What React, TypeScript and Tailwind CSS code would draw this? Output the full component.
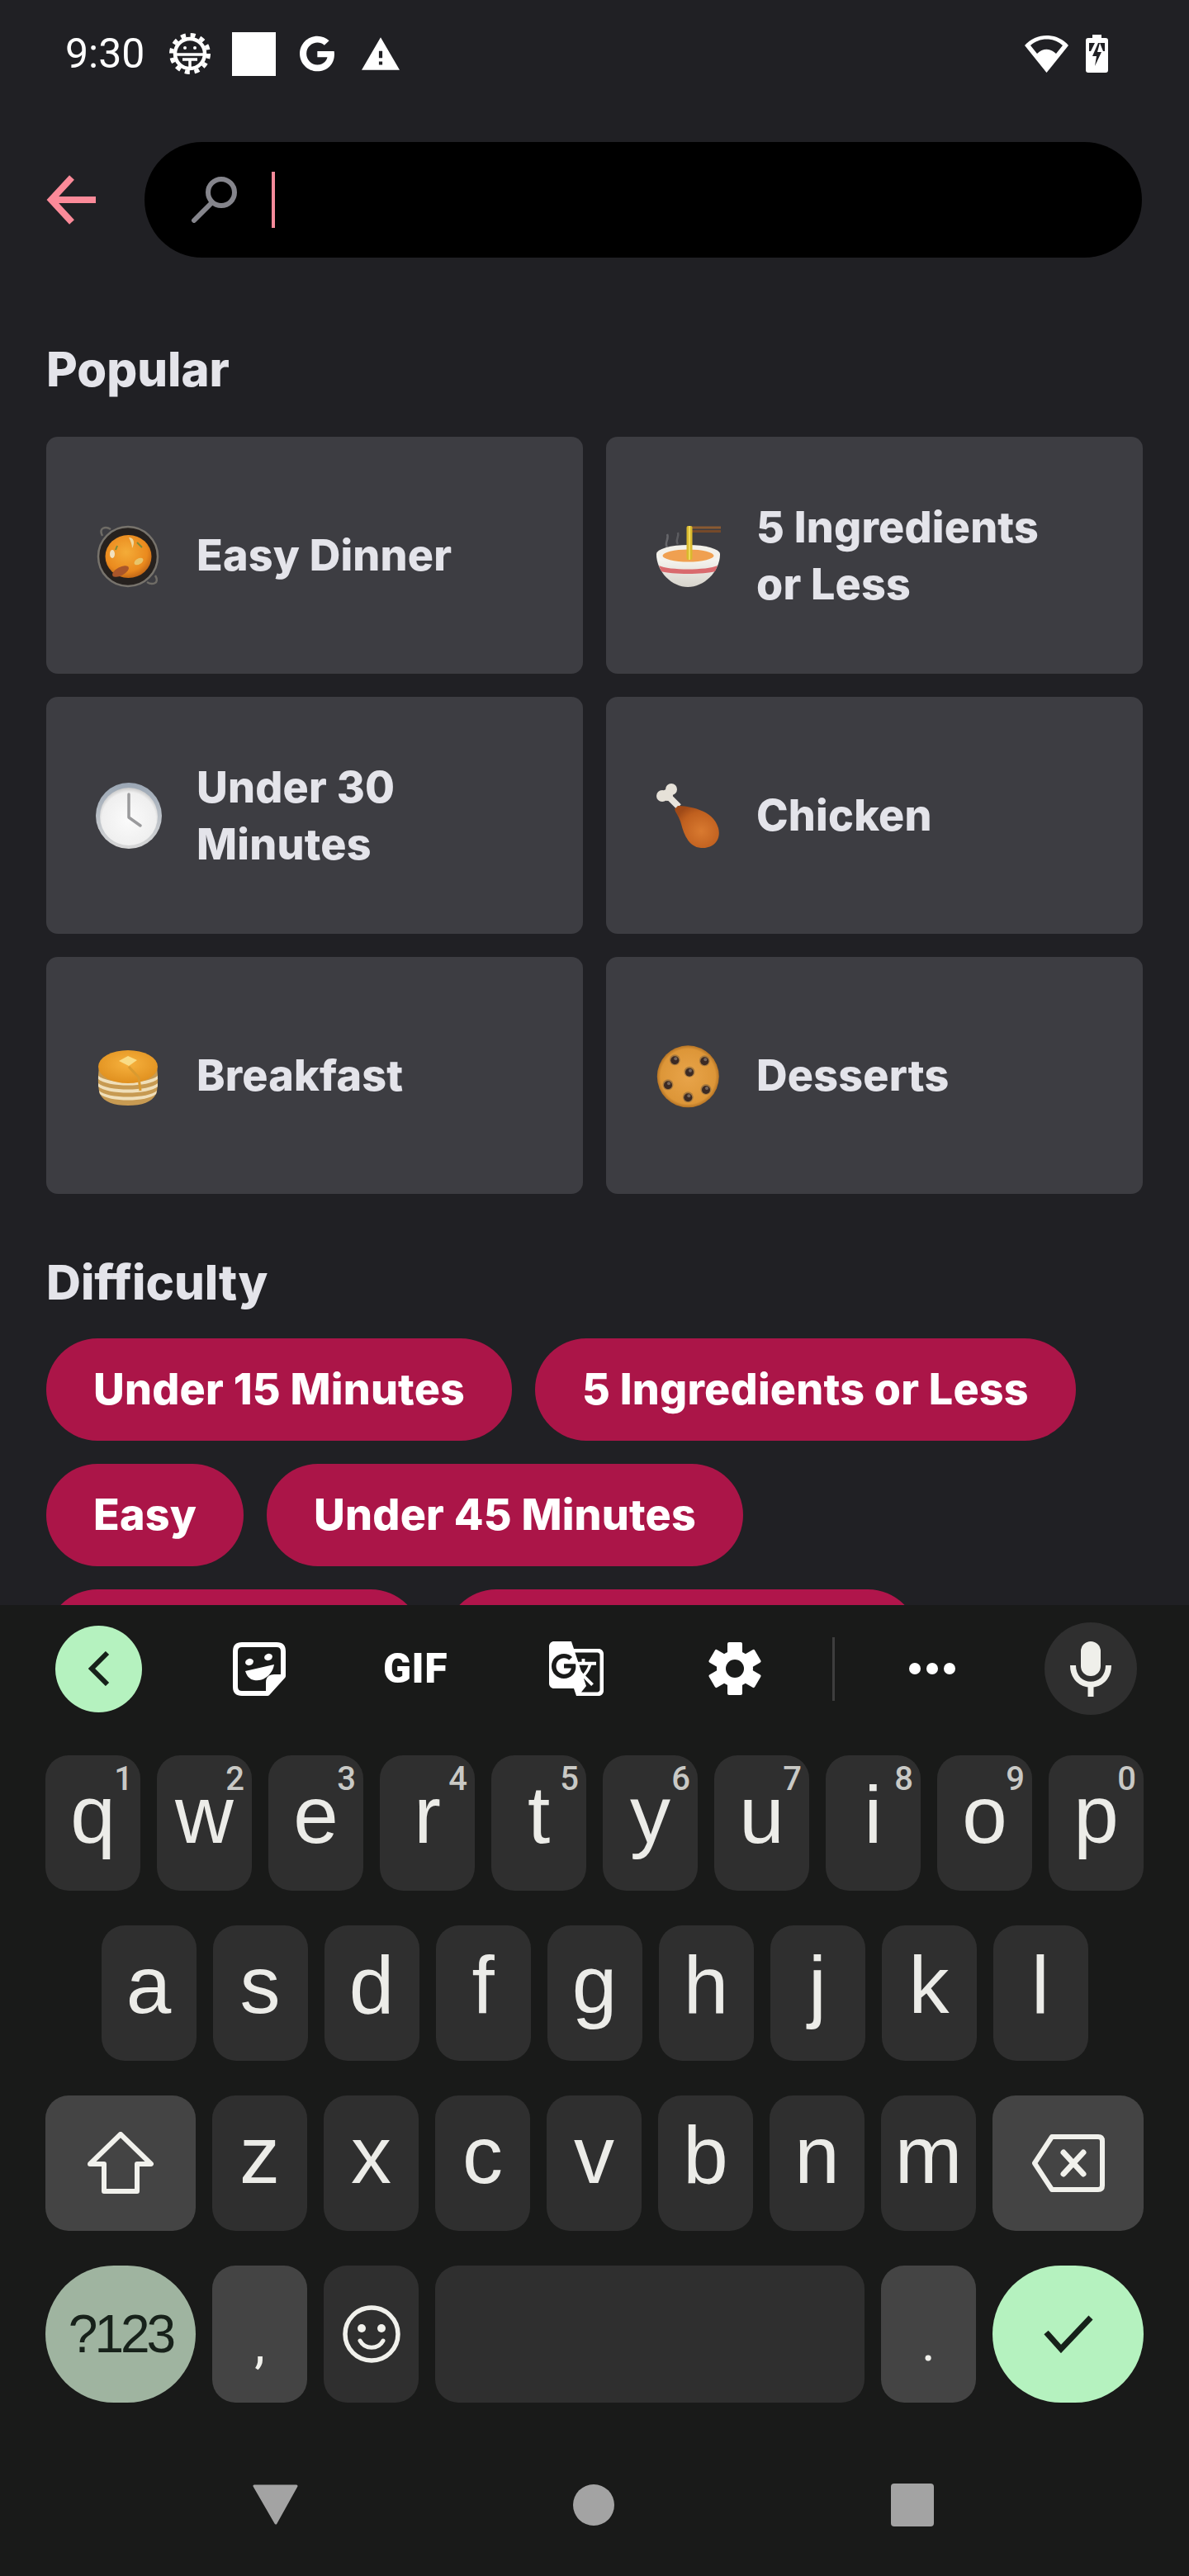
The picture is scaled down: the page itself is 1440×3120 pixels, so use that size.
import React from "react";
import { FaGoogle } from "react-icons/fa";
import { MdGTranslate } from "react-icons/md";

const Paella = () => (
  <svg width="80" height="80" viewBox="0 0 80 80">
    <defs>
      <radialGradient id="rice" cx="45%" cy="40%" r="65%">
        <stop offset="0" stopColor="#f4ac38" />
        <stop offset="0.7" stopColor="#ea8a1e" />
        <stop offset="1" stopColor="#b85e14" />
      </radialGradient>
    </defs>
    <path d="M8 16 C3 6 12 4 18 8" fill="none" stroke="#6f6c66" strokeWidth="2.5" />
    <path d="M72 64 C78 74 68 76 62 72" fill="none" stroke="#6f6c66" strokeWidth="2.5" />
    <circle cx="39" cy="41" r="36" fill="#26211e" stroke="#77736c" strokeWidth="2.5" />
    <ellipse cx="39.5" cy="41" rx="28" ry="26" fill="url(#rice)" />
    <ellipse cx="30" cy="59" rx="11" ry="5" fill="#a9562a" transform="rotate(-28 30 59)" />
    <path d="M40 18 C46 18 48 24 44 31 C44 26 42 22 40 18Z" fill="#f0d9a0" />
    <ellipse cx="20" cy="38" rx="3" ry="5" fill="#f2e2c0" />
    <ellipse cx="52" cy="47" rx="6" ry="3.5" fill="#e8c46a" transform="rotate(-30 52 47)" />
    <path d="M50 24 L56 30" stroke="#7a8a3a" strokeWidth="2" />
    <path d="M26 28 L24 33" stroke="#7a8a3a" strokeWidth="2" />
  </svg>
);

const Bowl = () => (
  <svg width="80" height="80" viewBox="0 0 80 80">
    <defs>
      <linearGradient id="bowlg" x1="0" y1="0" x2="0" y2="1">
        <stop offset="0" stopColor="#fbfaf6" />
        <stop offset="1" stopColor="#d6d3cb" />
      </linearGradient>
    </defs>
    <path d="M14 30 C10 24 17 20 14 14" fill="none" stroke="#66666a" strokeWidth="2.5" />
    <path d="M27 26 C23 21 29 18 27 12" fill="none" stroke="#5c5c60" strokeWidth="2.5" />
    <rect x="38" y="4.500" width="41" height="3" fill="#8a5a32" />
    <rect x="38" y="9" width="41" height="3" fill="#75492a" />
    <path d="M1 38 C1 60 20 78 39 78 C58 78 78 60 78 38 Z" fill="url(#bowlg)" />
    <ellipse cx="39.5" cy="38" rx="38.5" ry="11" fill="#f3f1ea" />
    <ellipse cx="39.5" cy="40" rx="31" ry="7.5" fill="#f0a050" />
    <path d="M4 52 C16 58 62 58 75 52 L72 59 C60 63 18 63 7 59 Z" fill="#d96a6e" />
    <rect x="37.5" y="4" width="7" height="41" rx="2" fill="#d9b92e" />
    <rect x="40" y="4" width="2" height="41" fill="#f0d95a" />
  </svg>
);

const ClockEmoji = () => (
  <svg width="80" height="80" viewBox="0 0 80 80">
    <defs>
      <linearGradient id="rim" x1="0" y1="0" x2="0" y2="1">
        <stop offset="0" stopColor="#9aa6b4" />
        <stop offset="1" stopColor="#d8d8d8" />
      </linearGradient>
      <radialGradient id="face" cx="50%" cy="55%" r="55%">
        <stop offset="0" stopColor="#fbfbfb" />
        <stop offset="0.85" stopColor="#efefef" />
        <stop offset="1" stopColor="#c8c8c8" />
      </radialGradient>
    </defs>
    <circle cx="40" cy="40" r="40" fill="url(#rim)" />
    <circle cx="40" cy="41" r="35" fill="url(#face)" />
    <path d="M40 14 V42 L54 52" fill="none" stroke="#9a9a9c" strokeWidth="3.5" strokeLinecap="round" strokeLinejoin="round" />
  </svg>
);

const Chicken = () => (
  <svg width="80" height="80" viewBox="0 0 80 80">
    <defs>
      <radialGradient id="meat" cx="60%" cy="60%" r="65%">
        <stop offset="0" stopColor="#d97a30" />
        <stop offset="0.7" stopColor="#c0601f" />
        <stop offset="1" stopColor="#a04a18" />
      </radialGradient>
    </defs>
    <path d="M14 15 L28 29" stroke="#e9e4dc" strokeWidth="8" />
    <circle cx="8" cy="16" r="7" fill="#e6e1d8" />
    <circle cx="19" cy="8" r="7" fill="#e6e1d8" />
    <circle cx="14" cy="15" r="7" fill="#e6e1d8" />
    <path d="M27 28 C38 28 70 32 76 55 C80 71 68 80 55 79 C40 78 34 62 31 50 C29 42 24 36 23 32 Z" fill="url(#meat)" />
  </svg>
);

const Pancakes = () => (
  <svg width="80" height="80" viewBox="0 0 80 80">
    <defs>
      <radialGradient id="pan" cx="50%" cy="40%" r="60%">
        <stop offset="0" stopColor="#f7b23e" />
        <stop offset="1" stopColor="#e0901f" />
      </radialGradient>
    </defs>
    <path d="M4 30 C2 42 3 58 5 62 C10 72 22 76 39 76 C56 76 68 72 73 62 C75 58 76 42 74 30 Z" fill="#c79a52" />
    <path d="M3 40 C14 50 64 50 75 40 L75 44 C64 54 14 54 3 44 Z" fill="#f0dfba" />
    <path d="M3 49 C14 59 64 59 75 49 L75 53 C64 63 14 63 3 53 Z" fill="#f0dfba" />
    <path d="M4 58 C14 68 64 68 74 58 L73 62 C62 72 16 72 5 62 Z" fill="#f0dfba" />
    <ellipse cx="39" cy="29" rx="36" ry="20" fill="url(#pan)" />
    <path d="M28 22 L39 16 L50 21 L40 28 Z" fill="#f9dc86" />
    <path d="M40 29 L52 42 L54 58" fill="none" stroke="#d99a30" strokeWidth="3" />
  </svg>
);

const Cookie = () => {
  const chips = [
    [23.3, 20.8],
    [59.3, 21.8],
    [41, 35.2],
    [15, 50.8],
    [61, 56.5],
    [39.3, 65.8],
  ];
  return (
    <svg width="80" height="80" viewBox="0 0 80 80">
      <defs>
        <radialGradient id="ck" cx="50%" cy="50%" r="52%">
          <stop offset="0" stopColor="#e8a44a" />
          <stop offset="0.85" stopColor="#dd9638" />
          <stop offset="1" stopColor="#a8681e" />
        </radialGradient>
      </defs>
      <circle cx="39.3" cy="40.8" r="37.5" fill="url(#ck)" />
      {chips.map(([x, y], i) => (
        <g key={i}>
          <circle cx={x} cy={y} r="6.5" fill="#a87a3e" />
          <circle cx={x} cy={y + 0.5} r="5" fill="#3b2a24" />
          <circle cx={x + 1} cy={y - 1.5} r="2" fill="#75665e" />
        </g>
      ))}
    </svg>
  );
};

const Tile = ({ icon, lines }: { icon: React.ReactNode; lines: string[] }) => (
  <div className="flex items-center gap-[42px] rounded-[14px] bg-[#3d3d42] pl-[60px]">
    <div className="h-[80px] w-[80px] shrink-0">{icon}</div>
    <div className="text-[52px] leading-[69px] font-extrabold tracking-[0.2px] text-[#e4e4ea]">
      {lines.map((l) => (
        <div key={l}>{l}</div>
      ))}
    </div>
  </div>
);

const Chip = ({ label }: { label: string }) => (
  <div className="flex h-[124px] items-center rounded-full bg-[#ab1548] px-[57px] text-[52px] font-extrabold tracking-[0.2px] text-white">
    {label}
  </div>
);

const Key = ({
  label,
  hint,
  className = "w-[115px] bg-[#2f2f2f]",
  children,
}: {
  label?: string;
  hint?: string;
  className?: string;
  children?: React.ReactNode;
}) => (
  <div className={`relative flex h-[164px] items-center justify-center rounded-[28px] ${className}`}>
    {label && (
      <span className="pb-[20px] font-['Liberation_Sans',sans-serif] text-[98px] leading-none text-[#ecece8]">
        {label}
      </span>
    )}
    {hint && (
      <span className="absolute top-[9px] right-[9px] font-['Roboto',sans-serif] text-[40px] leading-none font-medium text-[#c9c9c5]">
        {hint}
      </span>
    )}
    {children}
  </div>
);

const Row = ({ letters, hints }: { letters: string; hints?: string }) => (
  <>
    {letters.split("").map((c, i) => (
      <Key key={c} label={c} hint={hints ? hints[i] : undefined} />
    ))}
  </>
);

export default function App() {
  return (
    <div className="flex h-[3120px] w-[1440px] flex-col overflow-hidden bg-[#202024] font-['Inter',sans-serif]">
      <div className="h-[1944px] shrink-0 overflow-hidden">
        {/* status bar */}
        <div className="flex h-[130px] items-center justify-between pr-[98px] pl-[79px]">
          <div className="flex items-center">
            <span className="w-[126px] font-['Roboto',sans-serif] text-[50px] leading-none text-white">9:30</span>
            <svg width="50" height="50" viewBox="0 0 50 50">
              <circle cx="25" cy="25" r="22.5" fill="none" stroke="#fff" strokeWidth="5" strokeDasharray="6 5.78" />
              <circle cx="25" cy="25" r="18" fill="none" stroke="#fff" strokeWidth="4.500" />
              <path d="M7 26 H43" stroke="#fff" strokeWidth="3.500" />
              <path d="M16 32 H34 M25 32 V42" stroke="#fff" strokeWidth="3.500" />
              <circle cx="19" cy="18" r="2" fill="#fff" />
              <circle cx="31" cy="18" r="2" fill="#fff" />
            </svg>
            <div className="ml-[26px] h-[53px] w-[53px] bg-white" />
            <FaGoogle className="ml-[28px] h-[44px] w-[44px] text-white" />
            <svg className="ml-[32px]" width="46" height="42" viewBox="1 2 22 19">
              <path fill="#fff" fillRule="evenodd" d="M1 21h22L12 2 1 21zm12-3h-2v-2h2v2zm0-4h-2v-4h2v4z" />
            </svg>
          </div>
          <div className="flex items-center gap-[21px]">
            <svg width="53" height="45" viewBox="0 0 53 45">
              <path d="M26.5 45 L0 12 C14 -4 39 -4 53 12 Z" fill="#fff" />
              <path d="M7 12 C18 2 35 2 46 12 L38 22 C31 15 22 15 15 22 Z" fill="#202024" />
            </svg>
            <svg width="27" height="46" viewBox="0 0 27 46">
              <path d="M8 0 H19 V4 H24 Q27 4 27 7 V43 Q27 46 24 46 H3 Q0 46 0 43 V7 Q0 4 3 4 H8 Z" fill="#fff" />
              <path d="M4 10 H11 L6 20 H4 Z M17 10 H23 V20 H21 Z" fill="#202024" />
              <path d="M15 10 L8 26 H13 L11 38 L19 21 H14 L17 10 Z" fill="#202024" />
            </svg>
          </div>
        </div>

        {/* search */}
        <div className="mt-[42px] flex h-[140px] items-center pr-[57px] pl-[56px]">
          <svg className="shrink-0" width="64" height="64" viewBox="0 0 64 64">
            <path d="M60 32 H8 M31 5 L6 32 L31 59" fill="none" stroke="#fb8a99" strokeWidth="8" />
          </svg>
          <div className="ml-[55px] flex h-[140px] flex-1 items-center rounded-full bg-black pl-[56px]">
            <svg width="56" height="56" viewBox="0 0 56 56">
              <circle cx="37" cy="19" r="16" fill="none" stroke="#85858c" strokeWidth="6" />
              <path d="M26 31 L4 53" stroke="#85858c" strokeWidth="6" strokeLinecap="round" />
            </svg>
            <div className="ml-[42px] h-[68px] w-[4px] bg-[#f58a9a]" />
          </div>
        </div>

        {/* popular */}
        <h2 className="mt-[101px] mb-[48px] px-[56px] text-[58px] leading-[68px] font-extrabold text-[#e4e4ea]">Popular</h2>
        <div className="mx-[56px] grid w-[1328px] auto-rows-[287px] grid-cols-2 gap-[28px]">
          <Tile icon={<Paella />} lines={["Easy Dinner"]} />
          <Tile icon={<Bowl />} lines={["5 Ingredients", "or Less"]} />
          <Tile icon={<ClockEmoji />} lines={["Under 30", "Minutes"]} />
          <Tile icon={<Chicken />} lines={["Chicken"]} />
          <Tile icon={<Pancakes />} lines={["Breakfast"]} />
          <Tile icon={<Cookie />} lines={["Desserts"]} />
        </div>

        {/* difficulty */}
        <h2 className="mt-[71px] mb-[32px] px-[56px] text-[58px] leading-[72px] font-extrabold text-[#e4e4ea]">Difficulty</h2>
        <div className="mx-[56px] flex w-[1328px] flex-col gap-[28px]">
          <div className="flex gap-[28px]">
            <Chip label="Under 15 Minutes" />
            <Chip label="5 Ingredients or Less" />
          </div>
          <div className="flex gap-[28px]">
            <Chip label="Easy" />
            <Chip label="Under 45 Minutes" />
          </div>
          <div className="flex gap-[28px]">
            <div className="h-[124px] w-[455px] rounded-full bg-[#b0154b]" />
            <div className="h-[124px] w-[574px] rounded-full bg-[#b0154b]" />
          </div>
        </div>
      </div>

      {/* keyboard */}
      <div className="flex flex-1 flex-col bg-[#191a19]">
        {/* toolbar */}
        <div className="flex h-[154px] items-center pr-[63px] pl-[67px]">
          <div className="flex h-[105px] w-[105px] items-center justify-center rounded-full bg-[#b5f2bf]">
            <svg width="28" height="42" viewBox="0 0 28 42">
              <path d="M24 2 L5 21 L24 40" fill="none" stroke="#17211a" strokeWidth="6" />
            </svg>
          </div>
          <svg className="ml-[110px]" width="64" height="65" viewBox="0 0 64 65">
            <path d="M11 3 H53 Q61 3 61 11 V41 L42 62 H11 Q3 62 3 54 V11 Q3 3 11 3 Z" fill="none" stroke="#fff" strokeWidth="6" strokeLinejoin="round" />
            <path d="M61 41 H50 Q42 41 42 49 V62" fill="#fff" stroke="#fff" strokeWidth="4" />
            <ellipse cx="20" cy="24" rx="5" ry="4" fill="#fff" transform="rotate(-20 20 24)" />
            <ellipse cx="43" cy="18" rx="5" ry="4" fill="#fff" transform="rotate(-20 43 18)" />
            <path d="M15 35 L50 27 C48 40 36 48 26 46 C20 45 17 41 15 35 Z" fill="#fff" />
          </svg>
          <span className="ml-[118px] w-[84px] font-['Roboto',sans-serif] text-[50px] leading-none font-black tracking-[0.5px] text-white">GIF</span>
          <MdGTranslate className="ml-[114px] h-[72px] w-[72px] text-white" />
          <svg className="ml-[124px]" width="64" height="64" viewBox="0 0 64 64">
            <g fill="#fff">
              <circle cx="32" cy="32" r="22" />
              {[0, 60, 120, 180, 240, 300].map((a) => (
                <rect key={a} x="23" y="0" width="18" height="20" rx="2" transform={`rotate(${a} 32 32)`} />
              ))}
            </g>
            <circle cx="32" cy="32" r="11" fill="#191a19" />
          </svg>
          <div className="ml-[86px] h-[77px] w-[3px] bg-[#3e3e3e]" />
          <div className="ml-[90px] flex gap-[7px]">
            <div className="h-[14px] w-[14px] rounded-full bg-white" />
            <div className="h-[14px] w-[14px] rounded-full bg-white" />
            <div className="h-[14px] w-[14px] rounded-full bg-white" />
          </div>
          <div className="ml-auto flex h-[112px] w-[112px] items-center justify-center rounded-full bg-[#2f2f2f]">
            <svg width="50" height="67" viewBox="0 0 50 67">
              <rect x="13" y="0" width="24" height="42" rx="12" fill="#efefea" />
              <path d="M3.5 29 C3.5 60 46.500 60 46.500 29" fill="none" stroke="#efefea" strokeWidth="7" />
              <path d="M25 50 V67" stroke="#efefea" strokeWidth="7" />
            </svg>
          </div>
        </div>

        {/* keys */}
        <div className="flex flex-col gap-[42px] pt-[28px]">
          <div className="flex justify-center gap-[20px]">
            <Row letters="qwertyuiop" hints="1234567890" />
          </div>
          <div className="flex justify-center gap-[20px]">
            <Row letters="asdfghjkl" />
          </div>
          <div className="flex justify-center gap-[20px]">
            <Key className="w-[182px] bg-[#444444]">
              <svg width="80" height="76" viewBox="0 0 80 76">
                <path d="M40 3 L77 39 H60 V72 H20 V39 H3 Z" fill="none" stroke="#f1f1ec" strokeWidth="6" strokeLinejoin="round" />
              </svg>
            </Key>
            <Row letters="zxcvbnm" />
            <Key className="w-[183px] bg-[#444444]">
              <svg width="88" height="70" viewBox="0 0 88 70">
                <path d="M24 3 H80 Q85 3 85 8 V62 Q85 67 80 67 H24 L3 35 Z" fill="none" stroke="#f1f1ec" strokeWidth="6" strokeLinejoin="round" />
                <path d="M38 22 L62 48 M62 22 L38 48" stroke="#f1f1ec" strokeWidth="7" strokeLinecap="round" />
              </svg>
            </Key>
          </div>
          <div className="flex h-[166px] items-stretch justify-center gap-[20px]">
            <div className="flex w-[182px] items-center justify-center rounded-full bg-[#9fb4a0] font-['Liberation_Sans',sans-serif] text-[64px] leading-none tracking-[-4px] text-[#17211a]">
              ?123
            </div>
            <div className="flex w-[115px] items-end justify-center rounded-[28px] bg-[#444444] pb-[38px] font-['Roboto',sans-serif] text-[64px] leading-none text-[#f1f1ec]">
              ,
            </div>
            <div className="flex w-[115px] items-center justify-center rounded-[28px] bg-[#2f2f2f]">
              <svg width="70" height="70" viewBox="0 0 70 70">
                <circle cx="35" cy="35" r="32" fill="none" stroke="#f1f1ec" strokeWidth="5.5" />
                <circle cx="23" cy="28" r="5" fill="#f1f1ec" />
                <circle cx="47" cy="28" r="5" fill="#f1f1ec" />
                <path d="M21 43 C27 54 43 54 49 43" fill="none" stroke="#f1f1ec" strokeWidth="5" strokeLinecap="round" />
              </svg>
            </div>
            <div className="w-[520px] rounded-[28px] bg-[#2f2f2f]" />
            <div className="flex w-[115px] items-end justify-center rounded-[28px] bg-[#444444] pb-[40px] font-['Roboto',sans-serif] text-[64px] leading-none text-[#f1f1ec]">
              .
            </div>
            <div className="flex w-[183px] items-center justify-center rounded-full bg-[#b5f2bf]">
              <svg width="60" height="46" viewBox="0 0 60 46">
                <path d="M3 21 L21 41 L57 3" fill="none" stroke="#17211a" strokeWidth="7" />
              </svg>
            </div>
          </div>
        </div>

        {/* nav */}
        <div className="mt-[98px] flex items-center pl-[305px]">
          <svg width="57" height="50" viewBox="0 0 57 50">
            <path d="M3 2 H54 L29 47 Z" fill="#a3a3a3" stroke="#a3a3a3" strokeWidth="3" strokeLinejoin="round" />
          </svg>
          <div className="ml-[332px] h-[50px] w-[50px] rounded-full bg-[#a3a3a3]" />
          <div className="ml-[335px] h-[52px] w-[52px] rounded-[4px] bg-[#a3a3a3]" />
        </div>
      </div>
    </div>
  );
}
